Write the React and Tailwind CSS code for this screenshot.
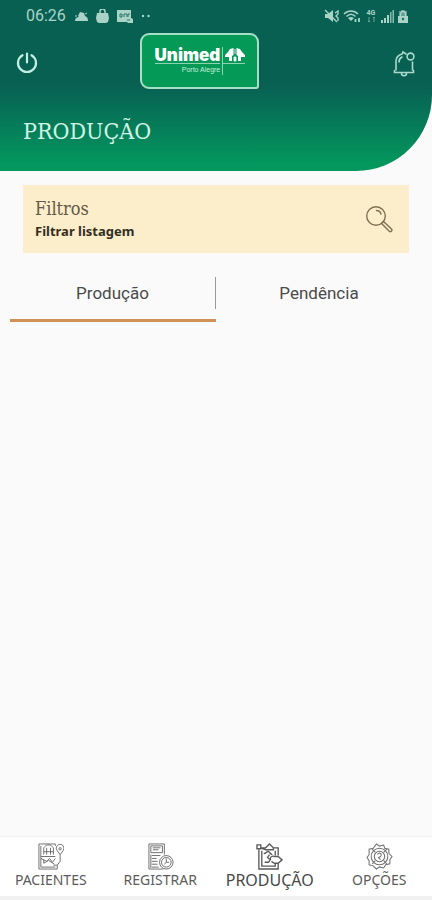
import React, { useState } from "react";
import clsx from "clsx";

const StatusBar = () => (
  <div className="flex h-8 items-center justify-between pl-[26px] pr-6 text-[#a9d3c7]">
    <div className="flex items-center gap-2">
      <span className="font-['Roboto'] text-base leading-5">06:26</span>
      <svg width="14" height="14" viewBox="0 0 14 14" fill="currentColor">
        <path d="M1 12c0-3 2-4 4-4l-1-1 2-4 4 1 1 3c2 1 3 2 3 5z" />
        <path d="M1 7h2M11 5l2-1" stroke="currentColor" />
      </svg>
      <svg width="13" height="15" viewBox="0 0 13 15" fill="currentColor">
        <path d="M4 4V2.500a2.500 2.500 0 0 1 5 0V4" fill="none" stroke="currentColor" strokeWidth="1.500" />
        <path d="M1 4h11l1 5-1 4-2 1H3l-2-1-1-4z" />
      </svg>
      <svg width="16" height="14" viewBox="0 0 16 14" fill="currentColor">
        <path d="M0 1h14v8l2 1v4h-5l-1-1H0z" />
        <path d="M3 5h2v3H3zM7 8V5h3v3M11 8V5h2M10 11h3" fill="none" stroke="#2a7465" />
      </svg>
      <svg width="10" height="4" viewBox="0 0 10 4" fill="currentColor">
        <circle cx="2" cy="2" r="1.200" />
        <circle cx="7.500" cy="2" r="1.200" />
      </svg>
    </div>
    <div className="flex items-center gap-1">
      <svg width="15" height="14" viewBox="0 0 15 14" fill="currentColor">
        <path d="M1 5h3l5-4v12l-5-4H1z" />
        <path d="m1 1 12 12M11 4l3-2v3l-2 2 2 2v3" fill="none" stroke="currentColor" strokeWidth="1.400" />
      </svg>
      <svg width="18" height="15" viewBox="0 0 18 15" fill="none" stroke="currentColor" strokeWidth="1.500">
        <path d="M1 5c4-4 10-4 14 0M3.500 7.500c3-3 6-3 9 0" />
        <path d="m5 9 3 3 3-3c-2-1.500-4-1.500-6 0z" fill="currentColor" stroke="none" />
        <path d="M12.500 10v3M16 9v4" strokeWidth="1.800" />
      </svg>
      <span className="flex w-3 flex-col items-center font-['Roboto'] text-[7px] font-bold leading-[7px]">
        <span>4G</span>
        <svg width="9" height="6" viewBox="0 0 9 6" fill="none" stroke="currentColor" opacity="0.6">
          <path d="M2 0v5M7 0v5M1 4l1 1 1-1M6 1l1-1 1 1" />
        </svg>
      </span>
      <svg width="13" height="13" viewBox="0 0 13 13" fill="currentColor">
        <path d="M0 10h2v3H0zM3 8h2v5H3zM6 5h2v8H6z" />
        <path d="M9 2h1.500v11H9zM11.500 0H13v13h-1.500z" opacity="0.8" />
      </svg>
      <svg width="10" height="15" viewBox="0 0 10 15" fill="currentColor">
        <path d="M3 1h4v1h2v12H1V2h2z" opacity="0.55" />
        <path d="M0 7h10v7H0z" />
        <path d="M2.500 7V5a2.500 2.500 0 0 1 5 0v2" fill="none" stroke="currentColor" strokeWidth="1.300" />
        <circle cx="5" cy="10" r="1.200" fill="#17695b" />
      </svg>
    </div>
  </div>
);

const Logo = () => (
  <div className="flex h-[56px] w-[119px] flex-col items-center rounded-t-[9px] rounded-bl-[9px] rounded-br-[3px] border-2 border-[#a6dfc6] bg-[#049957] pt-3 text-white">
    <div className="flex">
      <div className="flex flex-col items-end border-r border-[#8fd3b4] pr-0.5">
        <span className="font-['Inter'] text-[17px] font-black leading-4">Unimed</span>
        <span className="w-full border-t border-[#8fd3b4] text-right font-['Liberation_Sans'] text-[7px] leading-[11px] text-[#c6ecd9]">
          Porto Alegre
        </span>
      </div>
      <div className="h-[17px] border-b border-[#8fd3b4] pl-0.5">
        <svg width="20" height="15" viewBox="0 0 20 15" fill="white">
          <path d="M8.500 1 5 2 3 5 0 8v2h4v4h3V9l1.500-1z" />
          <path d="m11.500 1 3.500 1 2 3 3 3v2h-4v4h-3V9l-1.500-1z" />
          <path d="M10 2v5M9 10v4h2v-4z" stroke="white" strokeWidth="0.800" />
        </svg>
      </div>
    </div>
  </div>
);

const PowerIcon = () => (
  <svg width="22" height="22" viewBox="0 0 22 22" fill="none" stroke="#c3efe3" strokeWidth="2.200" strokeLinecap="round">
    <path d="M11 1.500v9M6.500 3.200a9 9 0 1 0 9 0" />
  </svg>
);

const BellIcon = () => (
  <svg width="22" height="27" viewBox="0 0 22 27" fill="none" stroke="#a9d9cc" strokeWidth="1.600" strokeLinecap="round">
    <path d="M3 20v-9c0-4 3-6 6-7l1-2 3 2M19.500 12v8M1.500 20.500v2h19v-2M8.500 23.500c0 3 5 3 5 0" />
    <path d="M6 12c0-3 1-4 3-5" />
    <circle cx="17.500" cy="6.500" r="3.400" />
  </svg>
);

const SearchIcon = () => (
  <svg width="28" height="28" viewBox="0 0 28 28" fill="none" stroke="#7d7354" strokeWidth="1.400" strokeLinecap="round">
    <circle cx="11" cy="11" r="9.300" />
    <path d="M11.500 5.500c2 0 4 1.500 4.500 3.500M16.500 18.500l2-2 8 7.500c1.300 1.500-.8 3.500-2.200 2.200z" />
  </svg>
);

const PatientsIcon = () => (
  <svg width="27" height="27" viewBox="0 0 28 28" fill="none" stroke="#6d6d6d">
    <path d="M19 3V1H2v26h19v-4M4 3v22M4 25h15" />
    <path d="M7 12V5l3-3h4l3 3v7M10 5v7M14 5v7M7 9h10M4 14h15M4 16l6 3 3-3 3 4 3-4M7 17v4l5-3 6 4" />
    <path d="M20 6a4 4 0 1 1 7 2l-3 4-3-4zM24 12v7l-3 4h-4" />
    <circle cx="24" cy="6" r="1.200" />
  </svg>
);

const RegisterIcon = () => (
  <svg width="27" height="27" viewBox="0 0 28 28" fill="none" stroke="#6d6d6d">
    <path d="M18 12V1H2v26h15" />
    <path d="M4 3h12v7H4zM6 5h8M6 7h6M5 13h9M5 16h5M5 19h6M5 22h6M5 25h7M4 12v14" />
    <circle cx="20" cy="20" r="7" />
    <circle cx="20" cy="20" r="5" />
    <path d="M20 16v4h3M20 20l-2 2" />
  </svg>
);

const ProductionIcon = () => (
  <svg width="27" height="27" viewBox="0 0 28 28" fill="none" stroke="#5a5a5a" strokeWidth="1.400">
    <path d="M3 7v20h20v-6M6 8v16h14v-3M23 13V5h-5M20 13V8M1 2h4v4H1zM5 5h5l4-4 4 4v2h-8z" />
    <path d="M8 11c3 0 3-3 5-2s2 3 4 3M9 20h4l2-3c-1-3 3-4 4-3h4l4 3.500-4 3.500h-4l-3-2M14 12l-2 3 2 2" />
  </svg>
);

const OptionsIcon = () => (
  <svg width="27" height="27" viewBox="0 0 26 26" fill="none" stroke="#707070">
    <path d="m10 1 3 2 4-1 1 3 4 1v4l3 3-2 3v4l-4 1-2 3-4-1-3 2-3-3-4-1v-4l-2-3 2-3V6l4-1z" />
    <circle cx="13" cy="13" r="8" />
    <circle cx="13" cy="13" r="5" />
    <path d="M11 11c2-3 5 0 3 2l-2 1 2 2M6 6l3 3M20 6l-3 3M6 20l3-3M20 20l-3-3" />
  </svg>
);

const navItems = [
  { label: "PACIENTES", icon: <PatientsIcon /> },
  { label: "REGISTRAR", icon: <RegisterIcon /> },
  { label: "PRODUÇÃO", icon: <ProductionIcon /> },
  { label: "OPÇÕES", icon: <OptionsIcon /> },
];

const tabs = ["Produção", "Pendência"];

const App = () => {
  const [tab, setTab] = useState("Produção");
  const [page, setPage] = useState("PRODUÇÃO");

  return (
    <div className="flex min-h-screen flex-col bg-[#fafafa]">
      <header className="rounded-br-[76px] bg-linear-to-b from-[#086053] from-50% to-[#03965d] to-95% pb-6">
        <StatusBar />
        <div className="grid grid-cols-[4fr_auto_5fr] items-center pl-4 pr-[17px] pt-px">
          <button type="button" aria-label="Sair" className="justify-self-start pt-1">
            <PowerIcon />
          </button>
          <Logo />
          <button type="button" aria-label="Notificações" className="justify-self-end pt-1">
            <BellIcon />
          </button>
        </div>
        <h1 className="mt-[26px] px-[23px] font-['DejaVu_Serif_Condensed','DejaVu_Serif',serif] text-[23px] leading-8 text-[#cff3e4]">
          PRODUÇÃO
        </h1>
      </header>

      <main className="flex-1 pt-[14px]">
        <div className="px-[23px]">
          <button
            type="button"
            className="flex h-[68px] w-full items-center justify-between bg-[#fdeecb] pl-3 pr-4 text-left"
          >
            <span className="flex flex-col">
              <span className="font-['DejaVu_Serif_Condensed','DejaVu_Serif',serif] text-[18px] leading-6 text-[#62594a]">
                Filtros
              </span>
              <span className="font-['Noto_Sans'] text-[13px] font-bold leading-5 text-[#352d20]">
                Filtrar listagem
              </span>
            </span>
            <SearchIcon />
          </button>
        </div>

        <div role="tablist" className="mt-6 grid grid-cols-2 px-[10px]">
          {tabs.map((name) => (
            <button
              key={name}
              type="button"
              role="tab"
              aria-selected={tab === name}
              onClick={() => setTab(name)}
              className="group font-['Roboto'] text-[17px] text-[#4a4a4a]"
            >
              <span className="block h-8 border-[#9a9a9a] leading-8 group-first:border-r">{name}</span>
              <span
                className={clsx("mt-2.5 block h-[3px]", tab === name ? "bg-[#cf9155]" : "bg-transparent")}
              />
            </button>
          ))}
        </div>
      </main>

      <nav className="sticky bottom-0 border-b-4 border-[#f1f1f1] bg-white">
        <div className="grid h-[60px] grid-cols-4 gap-x-2 border-t border-[#f3f3f3] pr-0.5">
          {navItems.map(({ label, icon }) => (
            <button
              key={label}
              type="button"
              onClick={() => setPage(label)}
              className="flex flex-col items-center pt-1.5"
            >
              {icon}
              <span
                className={clsx(
                  "font-['Noto_Sans'] leading-5",
                  page === label ? "text-base text-[#484848]" : "text-[14px] text-[#5c5c5c]"
                )}
              >
                {label}
              </span>
            </button>
          ))}
        </div>
      </nav>
    </div>
  );
};

export default App;
